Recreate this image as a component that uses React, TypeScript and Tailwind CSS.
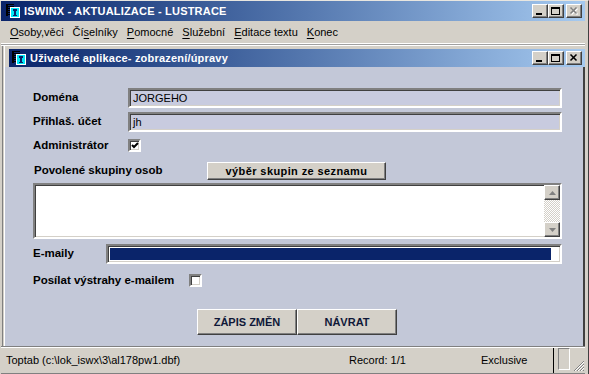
const font = "font-['Liberation_Sans',Arial,sans-serif]";
const raised =
  "border border-t-white border-l-white border-b-[#404040] border-r-[#404040] shadow-[inset_-1px_-1px_0_#808080] bg-[#d4d0c8]";
const sunken =
  "border-2 border-t-[#808080] border-l-[#808080] border-b-white border-r-white shadow-[inset_1px_1px_0_#404040,inset_-1px_-1px_0_#d4d0c8]";

function TitleIcon() {
  return (
    <svg width="15" height="14" viewBox="0 0 15 14">
      <rect x="1" y="0" width="2" height="12" fill="#000" />
      {[0, 2, 4, 6, 8, 10].map((y) => (
        <rect key={y} x="1" y={y} width="8" height="1" fill="#000" />
      ))}
      <rect x="5.5" y="3.5" width="9" height="10" fill="#00e8f8" stroke="#ffffff" />
      <rect x="8" y="5" width="4" height="2" fill="#0a246a" />
      <rect x="9" y="7" width="2" height="5" fill="#0a246a" />
      <rect x="8" y="11" width="4" height="1" fill="#0a246a" />
    </svg>
  );
}

function CapButton({ kind, disabled }: { kind: "min" | "max" | "close"; disabled?: boolean }) {
  const c = disabled ? "#808080" : "#000";
  return (
    <div className={`w-[16px] h-[14px] flex items-center justify-center ${raised}`}>
      <svg width="10" height="9" viewBox="0 0 10 9">
        {kind === "min" && <rect x="1" y="6" width="6" height="2" fill={c} />}
        {kind === "max" && (
          <>
            <rect x="0.5" y="0.5" width="8" height="7" fill="none" stroke={c} />
            <rect x="0" y="1" width="9" height="1" fill={c} />
          </>
        )}
        {kind === "close" && (
          <>
            {disabled && (
              <path d="M2.5 1.5 L8.5 7.5 M8.5 1.5 L2.5 7.5" stroke="#fff" strokeWidth="1.5" />
            )}
            <path d="M1.5 0.5 L7.5 6.5 M7.5 0.5 L1.5 6.5" stroke={c} strokeWidth="1.5" />
          </>
        )}
      </svg>
    </div>
  );
}

function TitleBar({
  title,
  closeDisabled,
  h,
  iconPad,
}: {
  title: string;
  closeDisabled?: boolean;
  h: string;
  iconPad: string;
}) {
  return (
    <div className={`${h} flex items-center bg-gradient-to-r from-[#0a246a] to-[#a6caf0] pr-[3px]`}>
      <div className={`${iconPad} pr-[4px] flex items-center`}>
        <TitleIcon />
      </div>
      <span className="text-white font-bold text-[11px] flex-1 tracking-[0.2px]">{title}</span>
      <CapButton kind="min" />
      <CapButton kind="max" />
      <div className="w-[2px]" />
      <CapButton kind="close" disabled={closeDisabled} />
    </div>
  );
}

function CheckBox({ checked }: { checked?: boolean }) {
  return (
    <div className={`w-[13px] h-[13px] bg-white flex items-center justify-center ${sunken}`}>
      {checked && (
        <svg width="8" height="7" viewBox="0 0 8 7">
          <path d="M1 3 L3 5 L7 1" stroke="#000" strokeWidth="2" fill="none" />
        </svg>
      )}
    </div>
  );
}

function Arrow({ up }: { up?: boolean }) {
  return (
    <svg width="7" height="4" viewBox="0 0 7 4">
      <path d={up ? "M3.5 0 L7 4 L0 4 Z" : "M0 0 L7 0 L3.5 4 Z"} fill="#808080" />
    </svg>
  );
}

const menu: [string, number][] = [
  ["Osoby,věci", 0],
  ["Číselníky", 2],
  ["Pomocné", 0],
  ["Služební", 0],
  ["Editace textu", 0],
  ["Konec", 0],
];

export default function App() {
  return (
    <div
      className={`${font} w-[589px] h-[374px] flex flex-col bg-[#d4d0c8] border-t border-t-[#e8e6e0] pl-px border-r border-r-[#404040] pr-[3px] text-black overflow-hidden`}
    >
      {/* hlavní okno */}
      <TitleBar title="ISWINX - AKTUALIZACE - LUSTRACE" closeDisabled h="h-[20px]" iconPad="pl-[4px]" />
      <div className="h-[22px] flex items-center gap-[9px] pl-[9px] text-[11px]">
        {menu.map(([label, u]) => (
          <span key={label}>
            {label.slice(0, u)}
            <span className="underline underline-offset-2">{label[u]}</span>
            {label.slice(u + 1)}
          </span>
        ))}
      </div>
      <div className="h-[3px] border-t border-b border-white bg-[#a0a0a0]" />

      {/* podřízené okno */}
      <div className="flex-1 flex flex-col ml-px border-l border-l-[#808080] pl-px">
        <div className="flex-1 flex flex-col border-l border-l-white">
          <div className="pt-[3px] pl-[4px] bg-[#d4d0c8]">
            <TitleBar title="Uživatelé aplikace- zobrazení/úpravy" h="h-[18px]" iconPad="pl-[2px]" />
          </div>
          <div className="flex-1 bg-[#c3c8d8] border-r-2 border-r-[#404040] pl-[28px] text-[11.5px]">
            <div className="mt-[21px] flex items-center">
              <span className="w-[95px] font-bold">Doména</span>
              <div className={`w-[434px] h-[20px] bg-[#c8cbdf] ${sunken} flex items-center pl-[3px] text-[11px]`}>
                JORGEHO
              </div>
            </div>
            <div className="mt-[4px] flex items-center">
              <span className="w-[95px] font-bold">Přihlaš. účet</span>
              <div className={`w-[434px] h-[20px] bg-[#c8cbdf] ${sunken} flex items-center pl-[3px] text-[11px]`}>
                jh
              </div>
            </div>
            <div className="mt-[7px] h-[13px] flex items-center">
              <span className="w-[95px] font-bold">Administrátor</span>
              <CheckBox checked />
            </div>
            <div className="mt-[10px] flex items-center">
              <span className="w-[174px] pl-px font-bold">Povolené skupiny osob</span>
              <div
                className={`w-[179px] h-[18px] flex items-center justify-center font-bold text-[11px] tracking-[0.4px] ${raised}`}
              >
                výběr skupin ze seznamu
              </div>
            </div>
            <div className={`mt-[3px] w-[529px] h-[56px] bg-white ${sunken} flex justify-end`}>
              <div className="w-[16px] flex flex-col">
                <div className={`h-[15px] flex items-center justify-center ${raised}`}>
                  <Arrow up />
                </div>
                <div className="flex-1 bg-[repeating-conic-gradient(#d4d0c8_0_25%,#ffffff_0_50%)] bg-[length:2px_2px]" />
                <div className={`h-[15px] flex items-center justify-center ${raised}`}>
                  <Arrow />
                </div>
              </div>
            </div>
            <div className="mt-[5px] flex items-center">
              <span className="w-[73px] font-bold">E-maily</span>
              <div className={`w-[456px] h-[20px] bg-white ${sunken} pt-[2px] pl-[2px] pr-[9px]`}>
                <div className="h-[12px] bg-[#0a246a]" />
              </div>
            </div>
            <div className="mt-[10px] h-[13px] flex items-center">
              <span className="w-[156px] font-bold">Posílat výstrahy e-mailem</span>
              <CheckBox />
            </div>
            <div className="mt-[22px] ml-[164px] flex">
              <div className={`w-[100px] h-[26px] flex items-center justify-center font-bold text-[11px] text-[#101838] ${raised}`}>
                ZÁPIS ZMĚN
              </div>
              <div className={`w-[100px] h-[26px] flex items-center justify-center font-bold text-[11px] text-[#101838] ${raised}`}>
                NÁVRAT
              </div>
            </div>
          </div>
        </div>
      </div>

      {/* stavový řádek */}
      <div className="h-[28px] border-t border-t-[#808080] flex flex-col">
        <div className="flex-1 border-t border-t-white border-b border-b-[#808080] flex items-center text-[11px] pl-[5px]">
          <span className="w-[343px]">Toptab (c:\lok_iswx\3\al178pw1.dbf)</span>
          <span className="w-[132px]">Record: 1/1</span>
          <span className="w-[72px]">Exclusive</span>
          <div className="self-stretch w-px bg-black" />
          <div className="ml-[4px] mb-[3px] self-stretch w-[12px] border-t border-l border-[#808080] border-b border-r border-b-white border-r-white" />
          <div className="flex-1 self-end flex justify-end pb-px">
            <svg width="12" height="12" viewBox="0 0 12 12">
              <path d="M11 1 L1 11 M11 4 L4 11 M11 7 L7 11 M11 10 L10 11" stroke="#808080" strokeWidth="1" />
              <path d="M11 2 L2 11 M11 5 L5 11 M11 8 L8 11" stroke="#ffffff" strokeWidth="1" />
            </svg>
          </div>
        </div>
      </div>
    </div>
  );
}
